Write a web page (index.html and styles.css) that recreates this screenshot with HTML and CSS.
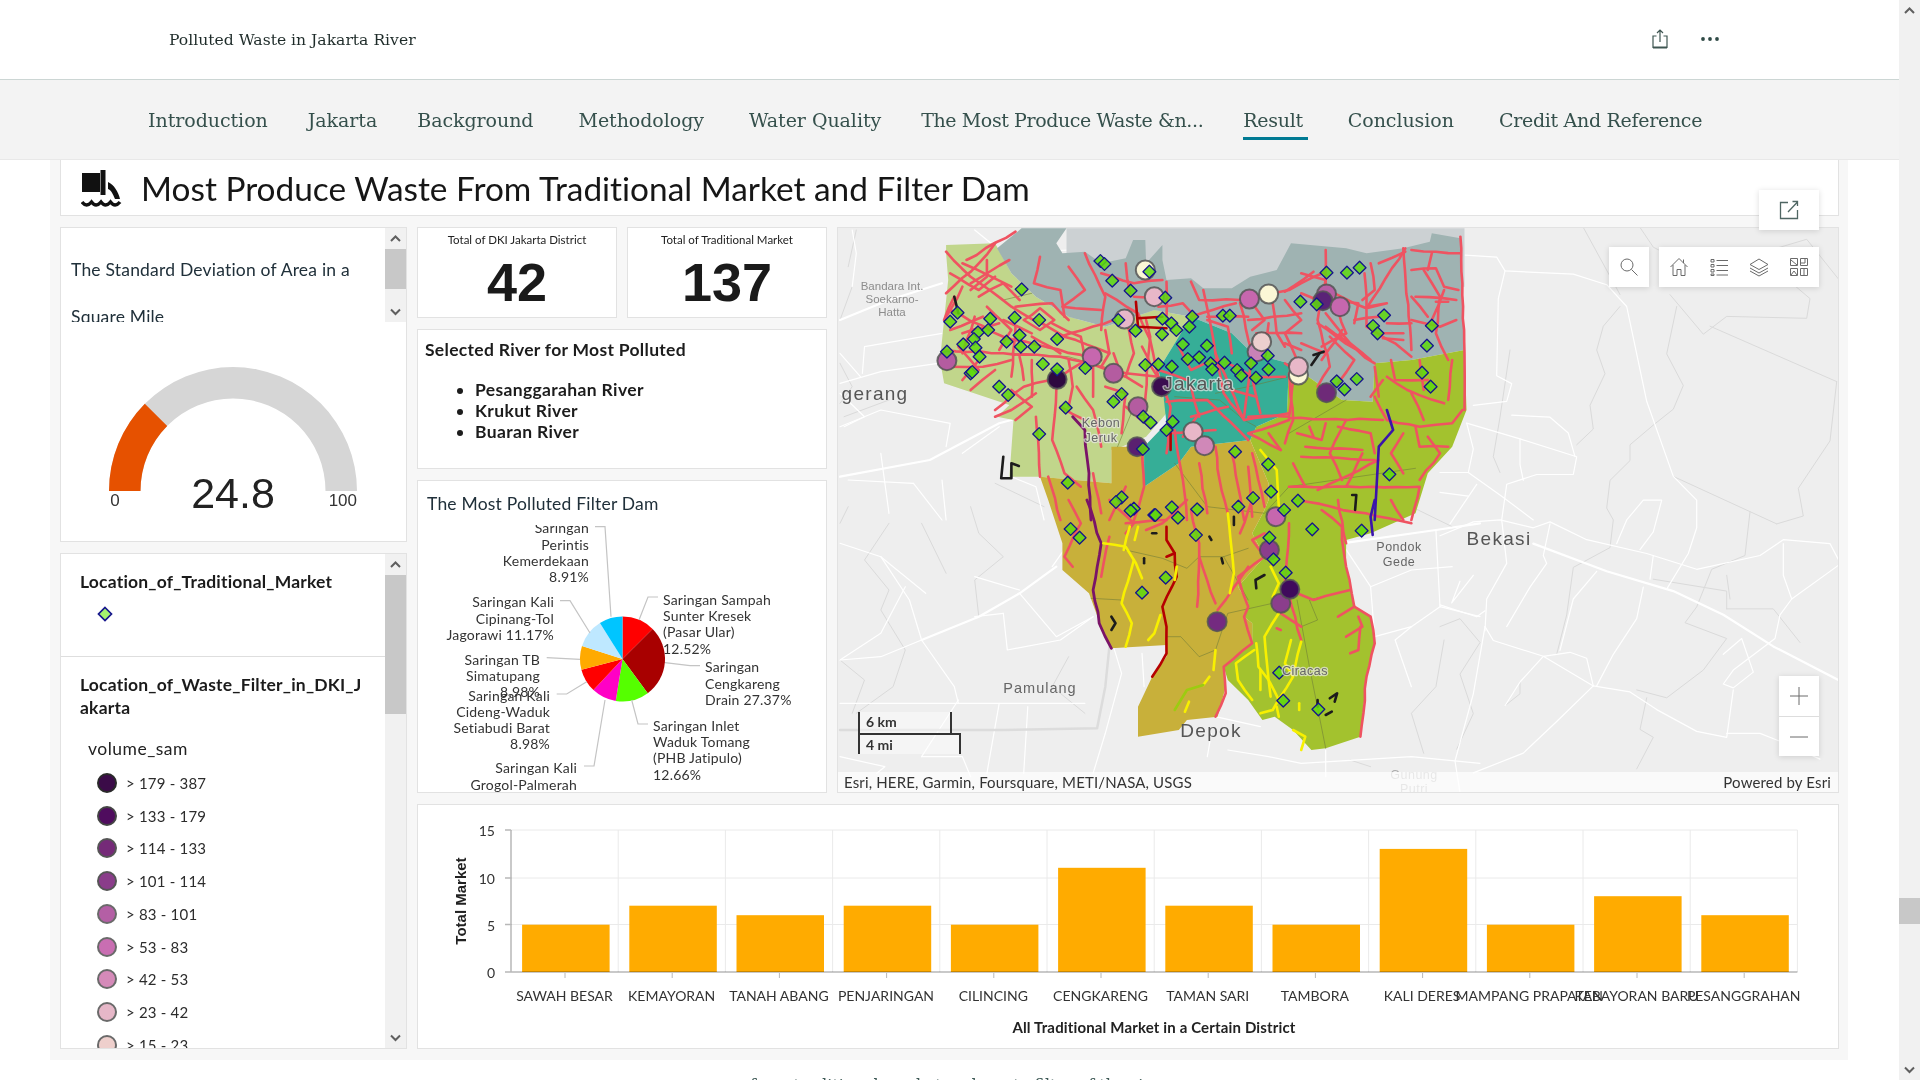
FILE: index.html
```html
<!DOCTYPE html>
<html lang="en">
<head>
<meta charset="utf-8">
<title>Polluted Waste in Jakarta River</title>
<link rel="stylesheet" href="styles.css">
</head>
<body>
<div class="app">
  <div class="main">
    <header class="topbar">
      <h1 class="story-title">Polluted Waste in Jakarta River</h1>
      <div class="top-actions">
        <svg class="ico-share" viewBox="0 0 16 20"><path d="M8 1V13M5 4L8 1L11 4M4.500 7H1V18.500H15V7H11.500"/><path class="thick" d="M1 18.500H15"/></svg>
        <svg class="ico-dots" viewBox="0 0 20 6"><circle cx="3" cy="3" r="1.900"/><circle cx="10" cy="3" r="1.900"/><circle cx="17" cy="3" r="1.900"/></svg>
      </div>
    </header>
    <nav class="tabs">
      <a class="tab">Introduction</a>
      <a class="tab">Jakarta</a>
      <a class="tab">Background</a>
      <a class="tab wide">Methodology</a>
      <a class="tab wide">Water Quality</a>
      <a class="tab long">The Most Produce Waste &amp;n...</a>
      <a class="tab active tight">Result</a>
      <a class="tab">Conclusion</a>
      <a class="tab wide tight">Credit And Reference</a>
    </nav>
    <section class="dash">
      <div class="card title-card">
        <svg class="title-icon" viewBox="0 0 44 40">
          <path d="M1 5H19V24H1Z"/><path d="M19.500 2H24.500V27H19.500Z"/>
          <path d="M27 14C33 17 37 23 39 31L34 31C32 26 30 22 27 21Z"/>
          <path class="wave" d="M1 34Q5.500 40 10.500 34Q15 40 20 34Q24.500 40 29.500 34Q34 40 39 34"/>
        </svg>
        <h2 class="dash-title">Most Produce Waste From Traditional Market and Filter Dam</h2>
      </div>
      <div class="dash-body">
        <div class="left-col">
          <div class="card gauge-card">
            <div class="gauge-head">
              <div class="gauge-text">
                <p>The Standard Deviation of Area in a</p>
                <p>Square Mile</p>
              </div>
              <div class="sb">
                <svg class="sb-arrow" viewBox="0 0 21 21"><path d="M6 13L10.500 8.500L15 13"/></svg>
                <div class="sb-track"><div class="sb-thumb thumb-gauge"></div></div>
                <svg class="sb-arrow" viewBox="0 0 21 21"><path d="M6 8.500L10.500 13L15 8.500"/></svg>
              </div>
            </div>
            <svg class="gauge" viewBox="61 322 345 219">
              <path class="g-back" d="M109 491A124 124 0 0 1 357 491L325.500 491A92.500 92.500 0 0 0 140.500 491Z"/>
              <path class="g-fill" d="M109 491A124 124 0 0 1 144.800 403.800L167.200 426A92.500 92.500 0 0 0 140.500 491Z"/>
              <text class="g-value" x="233" y="508" text-anchor="middle">24.8</text>
              <text class="g-tick" x="115" y="506" text-anchor="middle">0</text>
              <text class="g-tick" x="357" y="506" text-anchor="end">100</text>
            </svg>
          </div>
          <div class="card legend-card">
            <div class="legend-scroll">
              <div class="legend-sec first">
                <h3>Location_of_Traditional_Market</h3>
                <svg class="legend-diamond" viewBox="0 0 16 16"><path d="M8 1.500L14.500 8L8 14.500L1.500 8Z"/></svg>
              </div>
              <div class="legend-sec">
                <h3>Location_of_Waste_Filter_in_DKI_Jakarta</h3>
                <div class="legend-field">volume_sam</div>
                <ul class="legend-list">
                  <li><span class="sw c1"></span>&gt; 179 - 387</li>
                  <li><span class="sw c2"></span>&gt; 133 - 179</li>
                  <li><span class="sw c3"></span>&gt; 114 - 133</li>
                  <li><span class="sw c4"></span>&gt; 101 - 114</li>
                  <li><span class="sw c5"></span>&gt; 83 - 101</li>
                  <li><span class="sw c6"></span>&gt; 53 - 83</li>
                  <li><span class="sw c7"></span>&gt; 42 - 53</li>
                  <li><span class="sw c8"></span>&gt; 23 - 42</li>
                  <li><span class="sw c9"></span>&gt; 15 - 23</li>
                </ul>
              </div>
            </div>
            <div class="sb">
              <svg class="sb-arrow" viewBox="0 0 21 21"><path d="M6 13L10.500 8.500L15 13"/></svg>
              <div class="sb-track"><div class="sb-thumb thumb-legend"></div></div>
              <svg class="sb-arrow" viewBox="0 0 21 21"><path d="M6 8.500L10.500 13L15 8.500"/></svg>
            </div>
          </div>
        </div>
        <div class="right-grid">
          <div class="mid-col">
            <div class="kpi-row">
              <div class="card kpi"><div class="kpi-label">Total of DKI Jakarta District</div><div class="kpi-num">42</div></div>
              <div class="card kpi"><div class="kpi-label">Total of Traditional Market</div><div class="kpi-num">137</div></div>
            </div>
            <div class="card river-card">
              <h3>Selected River for Most Polluted</h3>
              <ul>
                <li>Pesanggarahan River</li>
                <li>Krukut River</li>
                <li>Buaran River</li>
              </ul>
            </div>
            <div class="card pie-card">
              <div class="pie-title">The Most Polluted Filter Dam</div>
              <svg class="pie" viewBox="418 525 408 267">
                <g id="pie-slices"></g>
                <g class="pie-lines">
                  <polyline points="595,526.700 605,526.700 611,616.700"/>
                  <polyline points="560,600.700 570,600.700 590,633"/>
                  <polyline points="546.700,657.700 580,659.300"/>
                  <polyline points="556.700,694 566.700,694 586.700,681.700"/>
                  <polyline points="584,766 594,766 605,700"/>
                  <polyline points="658,597 648,597 639,620"/>
                  <polyline points="700,665.700 690,665.700 665,662.700"/>
                  <polyline points="648,724 638,724 631.700,700"/>
                </g>
                <g class="pie-labels end">
                  <text x="589" y="533">Saringan</text><text x="589" y="550">Perintis</text><text x="589" y="566">Kemerdekaan</text><text x="589" y="582">8.91%</text>
                  <text x="554" y="607">Saringan Kali</text><text x="554" y="624">Cipinang-Tol</text><text x="554" y="640">Jagorawi 11.17%</text>
                  <text x="540" y="665">Saringan TB</text><text x="540" y="681">Simatupang</text><text x="540" y="697">8.98%</text>
                  <text x="550" y="701">Saringan Kali</text><text x="550" y="717">Cideng-Waduk</text><text x="550" y="733">Setiabudi Barat</text><text x="550" y="749">8.98%</text>
                  <text x="577" y="773">Saringan Kali</text><text x="577" y="790">Grogol-Palmerah</text>
                </g>
                <g class="pie-labels">
                  <text x="663" y="605">Saringan Sampah</text><text x="663" y="621">Sunter Kresek</text><text x="663" y="637">(Pasar Ular)</text><text x="663" y="654">12.52%</text>
                  <text x="705" y="672">Saringan</text><text x="705" y="689">Cengkareng</text><text x="705" y="705">Drain 27.37%</text>
                  <text x="653" y="731">Saringan Inlet</text><text x="653" y="747">Waduk Tomang</text><text x="653" y="763">(PHB Jatipulo)</text><text x="653" y="780">12.66%</text>
                </g>
              </svg>
            </div>
          </div>
          <div class="card map-card">
            <svg class="map" viewBox="838 228 1000 564">
              <g id="map-marks"></g>
              <g class="map-labels">
                <text class="ml-air" x="892" y="290">Bandara Int.</text>
                <text class="ml-air" x="892" y="303">Soekarno-</text>
                <text class="ml-air" x="892" y="316">Hatta</text>
                <text class="ml-city" x="875" y="400">gerang</text>
                <text class="ml-city halo" x="1199" y="390">Jakarta</text>
                <text class="ml-small halo" x="1101" y="427">Kebon</text>
                <text class="ml-small halo" x="1101" y="442">Jeruk</text>
                <text class="ml-city" x="1499" y="545">Bekasi</text>
                <text class="ml-small" x="1399" y="551">Pondok</text>
                <text class="ml-small" x="1399" y="566">Gede</text>
                <text class="ml-mid" x="1040" y="693">Pamulang</text>
                <text class="ml-city" x="1211" y="737">Depok</text>
                <text class="ml-small halo" x="1305" y="675">Ciracas</text>
                <text class="ml-small faint" x="1414" y="779">Gunung</text>
                <text class="ml-small faint" x="1414" y="793">Putri</text>
              </g>
            </svg>
            <button class="widget w-expand" type="button" aria-label="Open">
              <svg viewBox="0 0 20 20"><path d="M9 2.500H1.500V18.500H18.500V10M9 12L18.500 2M13.500 1.500H18.500V6"/></svg>
            </button>
            <button class="widget w-search" type="button" aria-label="Search">
              <svg viewBox="0 0 20 20"><circle cx="8" cy="8" r="6"/><path d="M12.500 12.500L18.500 18.500"/></svg>
            </button>
            <div class="widget w-tools">
              <svg viewBox="0 0 20 20"><path d="M1.500 10L10 1.500L18.500 10M4 8V18.500H8V12.500H12V18.500H16V8M14.500 2.500V6"/></svg>
              <svg viewBox="0 0 20 20"><path d="M2 2.500H5V5H2ZM2 7.500H5V10H2ZM2 12.500H5V15H2ZM2 17H5V18.500H2ZM7.500 3.500H19M7.500 8.500H19M7.500 13.500H19M7.500 18H19"/></svg>
              <svg viewBox="0 0 20 20"><path d="M10 2L19 7.500L10 12.500L1 7.500ZM1 11L10 16L19 11M1 14L10 19L19 14"/></svg>
              <svg viewBox="0 0 20 20"><path d="M1.500 1.500H8.500V8.500H1.500ZM11.500 1.500H18.500V8.500H11.500ZM1.500 11.500H8.500V18.500H1.500ZM11.500 11.500H18.500V18.500H11.500ZM2 3L8 8M12 6H16V2M2 18L5 14L8 18M15 12V18"/></svg>
            </div>
            <div class="widget w-zoom">
              <button type="button" aria-label="Zoom in"><svg viewBox="0 0 20 20"><path d="M10 1V19M1 10H19"/></svg></button>
              <button type="button" aria-label="Zoom out"><svg viewBox="0 0 20 20"><path d="M1 10H19"/></svg></button>
            </div>
            <div class="scale">
              <div class="scale-km">6 km</div>
              <div class="scale-mi">4 mi</div>
            </div>
            <div class="attrib"><span>Esri, HERE, Garmin, Foursquare, METI/NASA, USGS</span><span>Powered by Esri</span></div>
          </div>
          <div class="card bar-card">
            <svg class="bars" viewBox="418 805 1420 243">
              <g class="grid">
                <path d="M511 830H1797.400M511 878H1797.400M511 924.500H1797.400"/>
                <path d="M618.200 830V972M725.400 830V972M832.600 830V972M939.800 830V972M1047 830V972M1154.200 830V972M1261.400 830V972M1368.600 830V972M1475.800 830V972M1583 830V972M1690.200 830V972M1797.400 830V972"/>
              </g>
              <g class="bar">
                <rect x="522.100" y="924.700" width="87.500" height="47.300"/>
                <rect x="629.300" y="905.700" width="87.500" height="66.300"/>
                <rect x="736.500" y="915.200" width="87.500" height="56.800"/>
                <rect x="843.700" y="905.700" width="87.500" height="66.300"/>
                <rect x="950.900" y="924.700" width="87.500" height="47.300"/>
                <rect x="1058.100" y="867.800" width="87.500" height="104.200"/>
                <rect x="1165.300" y="905.700" width="87.500" height="66.300"/>
                <rect x="1272.500" y="924.700" width="87.500" height="47.300"/>
                <rect x="1379.700" y="848.900" width="87.500" height="123.100"/>
                <rect x="1486.900" y="924.700" width="87.500" height="47.300"/>
                <rect x="1594.100" y="896.200" width="87.500" height="75.800"/>
                <rect x="1701.300" y="915.200" width="87.500" height="56.800"/>
              </g>
              <path class="axis" d="M505 972H1797.400M511 830V972M505 830H511M505 878H511M505 924.500H511"/>
              <path class="ticks" d="M565 973V978M672.200 973V978M779.400 973V978M886.600 973V978M993.800 973V978M1101 973V978M1208.200 973V978M1315.400 973V978M1422.600 973V978M1529.800 973V978M1637 973V978M1744.200 973V978"/>
              <g class="y-labels">
                <text x="495" y="836">15</text><text x="495" y="884">10</text><text x="495" y="931">5</text><text x="495" y="978">0</text>
              </g>
              <text class="y-title" transform="translate(466 901) rotate(-90)">Total Market</text>
              <g class="x-labels">
                <text x="564.500" y="1001">SAWAH BESAR</text>
                <text x="671.700" y="1001">KEMAYORAN</text>
                <text x="778.900" y="1001">TANAH ABANG</text>
                <text x="886" y="1001">PENJARINGAN</text>
                <text x="993.300" y="1001">CILINCING</text>
                <text x="1100.500" y="1001">CENGKARENG</text>
                <text x="1207.700" y="1001">TAMAN SARI</text>
                <text x="1314.900" y="1001">TAMBORA</text>
                <text x="1422.100" y="1001">KALI DERES</text>
                <text x="1529.300" y="1001">MAMPANG PRAPATAN</text>
                <text x="1636.500" y="1001">KEBAYORAN BARU</text>
                <text x="1743.700" y="1001">PESANGGRAHAN</text>
              </g>
              <text class="x-title" x="1154" y="1033">All Traditional Market in a Certain District</text>
            </svg>
          </div>
        </div>
      </div>
    </section>
    <p class="after-text">from traditional market and waste filter of the river</p>
  </div>
  <div class="sb page-sb">
    <svg class="sb-arrow" viewBox="0 0 21 21"><path d="M6 13L10.500 8.500L15 13"/></svg>
    <div class="sb-track"><div class="sb-thumb thumb-page"></div></div>
    <svg class="sb-arrow" viewBox="0 0 21 21"><path d="M6 8.500L10.500 13L15 8.500"/></svg>
  </div>
</div>
<script src="map.js"></script>
</body>
</html>
```
FILE: styles.css
```css
* { box-sizing: border-box; }
html, body { margin: 0; height: 100%; overflow: hidden; background: #fff; }
body { font-family: Lato, "Open Sans", sans-serif; color: #1c1c1c; font-variant-ligatures: none; }
h1, h2, h3, p, ul { margin: 0; padding: 0; font-weight: inherit; }

.app { display: flex; height: 1080px; }
.main { flex: 1; min-width: 0; }

/* scrollbars */
.sb { width: 21px; flex: none; display: flex; flex-direction: column; background: #f1f1f1; }
.sb-arrow { width: 21px; height: 21px; flex: none; display: block; fill: none; stroke: #5f5f5f; stroke-width: 2; }
.sb-track { flex: 1; min-height: 0; }
.sb-thumb { background: #c8c8c8; }
.thumb-gauge { height: 40px; }
.thumb-legend { height: 139px; }
.thumb-page { height: 26px; margin-top: 877px; }

/* header */
.topbar { height: 80px; border-bottom: 1px solid #ccd6d4; display: flex; align-items: center; padding: 0 179px 0 169px; justify-content: space-between; }
.story-title { font: 15.600px "DejaVu Serif", serif; color: #1e2b29; }
.top-actions { display: flex; align-items: center; gap: 32px; }
.ico-share { width: 16px; height: 20px; fill: none; stroke: #3f5652; stroke-width: 1.200; margin-top: -2px; }
.ico-share .thick { stroke-width: 2; }
.ico-dots { width: 20px; height: 6px; fill: #2f4a46; margin-top: -2px; }

.tabs { height: 80px; background: #f3f3f3; border-bottom: 1px solid #e8e8e8; display: flex; align-items: center; gap: 40px; padding-left: 148px; }
.tab { font: 19px "DejaVu Serif", serif; color: #35504c; letter-spacing: -.05px; padding: 8px 0 6px; border-bottom: 3px solid transparent; margin-top: 1px; white-space: nowrap; }
.tab.wide { margin-left: 5px; }
.tab.long { letter-spacing: -.4px; }
.tab.tight { letter-spacing: -.3px; }
.tab.active { border-bottom-color: #007a93; padding-right: 5px; }

/* dashboard */
.dash { margin-left: 50px; width: 1798px; height: 900px; background: #f7f7f7; padding: 0 9px 0 10px; display: flex; flex-direction: column; gap: 11px; }
.card { background: #fff; border: 1px solid #e2e2e2; }
.title-card { height: 56px; flex: none; display: flex; align-items: center; gap: 16px; padding-left: 20px; border-top: 0; }
.title-icon { width: 44px; height: 40px; flex: none; fill: #111; margin-top: 1px; }
.title-icon .wave { fill: none; stroke: #111; stroke-width: 3.500; }
.dash-title { font-size: 33.400px; color: #161616; white-space: nowrap; }

.dash-body { display: flex; gap: 10px; flex: 1; min-height: 0; height: 822px; }
.left-col { width: 347px; flex: none; display: flex; flex-direction: column; gap: 11px; }
.gauge-card { height: 315px; flex: none; }
.gauge-head { height: 94px; display: flex; overflow: hidden; }
.gauge-text { flex: 1; padding: 18px 10px 0; font-size: 17.500px; letter-spacing: .2px; line-height: 47px; color: #20303a; height: 94px; overflow: hidden; }
.gauge { width: 345px; height: 219px; display: block; }
.g-back { fill: #d6d6d6; }
.g-fill { fill: #e65100; }
.g-value { font: 43px "Liberation Sans", sans-serif; fill: #222; }
.g-tick { font: 17px "Liberation Sans", sans-serif; fill: #333; }

.legend-card { height: 496px; flex: none; display: flex; }
.legend-scroll { flex: 1; min-width: 0; overflow: hidden; }
.legend-sec { padding: 16px 19px 0; }
.legend-sec.first { height: 103px; border-bottom: 1px solid #dedede; }
.legend-sec h3 { font-size: 17.500px; letter-spacing: .2px; font-weight: 700; line-height: 23px; color: #1b1b1b; overflow-wrap: anywhere; width: 288px; }
.legend-diamond { display: block; width: 16px; height: 16px; margin: 13px 0 0 17px; fill: #a5f36e; stroke: #14148c; stroke-width: 1.700; }
.legend-field { font-size: 17.500px; letter-spacing: .5px; line-height: 23px; margin: 18px 0 0 8px; color: #222; }
.legend-list { list-style: none; margin: 6.500px 0 0 17px; }
.legend-list li { display: flex; align-items: center; gap: 9px; height: 32.750px; font-size: 15px; color: #2c2c2c; letter-spacing: .2px; }
.sw { width: 20px; height: 20px; border-radius: 50%; border: 2px solid #6a6a6a; flex: none; }
.c1 { background: #3b0b48; border-color: #2a2a2a; }
.c2 { background: #4f0c5e; border-color: #444; }
.c3 { background: #752a78; border-color: #555; }
.c4 { background: #8a3d8a; border-color: #555; }
.c5 { background: #b45fa5; }
.c6 { background: #c96eb2; }
.c7 { background: #d58ab9; }
.c8 { background: #e6b7c8; }
.c9 { background: #eecfcc; }

.right-grid { flex: none; display: grid; grid-template-columns: 410px 1002px; grid-template-rows: 566px 245px; gap: 11px 10px; }
.mid-col { display: flex; flex-direction: column; gap: 11px; }
.kpi-row { display: flex; gap: 10px; height: 91px; flex: none; }
.kpi { flex: 1; text-align: center; }
.kpi-label { font-size: 11.500px; line-height: 14px; margin-top: 5px; color: #222; }
.kpi-num { font: 700 54px/50px "Liberation Sans", sans-serif; color: #1a1a1a; margin-top: 10px; }
.river-card { height: 140px; flex: none; padding: 8px 7px; }
.river-card h3 { font-size: 17.500px; letter-spacing: .3px; font-weight: 700; line-height: 23px; color: #1c1c1c; }
.river-card ul { margin: 18px 0 0 34px; list-style: disc; }
.river-card li { font-size: 17.500px; letter-spacing: .35px; font-weight: 700; line-height: 21px; margin-left: 16px; color: #1c1c1c; }
.pie-card { flex: 1; min-height: 0; display: flex; flex-direction: column; }
.pie-title { font-size: 17.500px; letter-spacing: .2px; line-height: 22px; padding: 12px 9px 10px; height: 44px; color: #20303a; flex: none; }
.pie { width: 408px; height: 267px; display: block; }
.pie-lines polyline { fill: none; stroke: #c4c4c4; stroke-width: 1.200; }
.pie-labels text { font-size: 14px; letter-spacing: .2px; fill: #333; }
.pie-labels.end text { text-anchor: end; }

/* map */
.map-card { position: relative; }
.map { width: 1000px; height: 564px; display: block; background: #eeeeee; }
.map * { stroke-linejoin: round; stroke-linecap: round; }
.r-sea { fill: #ccd1d3; }
.r-north { fill: #9fb3b2; }
.r-west { fill: #c1d68b; }
.r-central { fill: #36ae97; }
.r-south { fill: #c8b03a; }
.r-east { fill: #a3c22e; }
.l-road { fill: none; stroke: #fff; stroke-width: 1.200; }
.l-major { fill: none; stroke: #fff; stroke-width: 2.200; }
.l-bound { fill: none; stroke: #dadada; stroke-width: 1; }
.l-border { fill: none; stroke: #dcdcdc; stroke-width: 2.500; }
.l-district { fill: none; stroke: #6e7a38; stroke-width: .8; opacity: .7; }
.l-red { fill: none; stroke: #ef5361; stroke-width: 2.600; }
.l-dred { fill: none; stroke: #b50000; stroke-width: 2.600; }
.l-purple { fill: none; stroke: #7a1468; stroke-width: 2.800; }
.l-indigo { fill: none; stroke: #3a14ab; stroke-width: 2.600; }
.l-yellow { fill: none; stroke: #f8f000; stroke-width: 2.600; }
.l-lime { fill: none; stroke: #9ccc10; stroke-width: 2.600; }
.l-black { fill: none; stroke: #1c1c1c; stroke-width: 2.600; }
.m-diamond { fill: #5ed80e; fill-opacity: .85; stroke: #14148c; stroke-width: 1.300; }
.m-circle { stroke: #555; stroke-width: 2; stroke-opacity: .85; }
.map-labels text { text-anchor: middle; }
.ml-air { font: 11.500px "Liberation Sans", sans-serif; fill: #8c8c8c; }
.ml-city { font: 19px "Liberation Sans", sans-serif; fill: #555; letter-spacing: 1.300px; }
.ml-mid { font: 14.500px "Liberation Sans", sans-serif; fill: #666; letter-spacing: 1px; }
.ml-small { font: 12.500px "Liberation Sans", sans-serif; fill: #666; letter-spacing: .5px; }
.ml-small.faint { fill: #aaa; }
.halo { paint-order: stroke; stroke: #e8e8e8; stroke-width: 2.500px; stroke-opacity: .7; }

.widget { position: absolute; background: #fff; border: 0; padding: 0; box-shadow: 0 1px 6px rgba(0,0,0,.14); display: flex; align-items: center; justify-content: center; }
.widget svg { width: 20px; height: 20px; fill: none; stroke: #6a6a6a; stroke-width: 1; display: block; }
.w-expand { width: 60px; height: 40px; top: -38px; right: 19px; }
.w-expand svg { stroke: #4f6663; stroke-width: 1.300; }
.w-search { width: 40px; height: 40px; top: 19px; right: 189px; }
.w-tools { width: 160px; height: 40px; top: 19px; right: 19px; justify-content: space-around; }
.w-zoom { width: 40px; height: 80px; top: 448px; right: 19px; flex-direction: column; }
.w-zoom button { width: 40px; height: 40px; background: transparent; border: 0; padding: 0; display: flex; align-items: center; justify-content: center; }
.w-zoom button + button { border-top: 1px solid #ddd; }
.scale { position: absolute; left: 20px; top: 484px; font-size: 14px; font-weight: 700; color: #333; }
.scale-km { width: 94px; height: 21px; border-left: 2.500px solid #333; border-right: 2.500px solid #333; padding-left: 6px; line-height: 20px; background: rgba(255,255,255,.4); }
.scale-mi { width: 103px; height: 21px; border: 2.500px solid #333; border-bottom: 0; padding-left: 6px; line-height: 19px; background: rgba(255,255,255,.4); }
.attrib { position: absolute; left: 0; right: 0; bottom: 0; height: 20px; background: rgba(255,255,255,.72); display: flex; justify-content: space-between; padding: 0 7px 0 6px; font-size: 15px; letter-spacing: .15px; line-height: 20px; color: #333; }

/* bar chart */
.bar-card { grid-column: 1 / 3; }
.bars { width: 1420px; height: 243px; display: block; }
.grid path { fill: none; stroke: #eaeaea; stroke-width: 1; }
.bar rect { fill: #ffab00; }
.axis { fill: none; stroke: #b8b8b8; stroke-width: 1.500; mix-blend-mode: multiply; }
.ticks { fill: none; stroke: #b8b8b8; stroke-width: 1; }
.y-labels text { font-size: 14px; fill: #333; text-anchor: end; }
.x-labels text { font-size: 14px; fill: #333; text-anchor: middle; }
.y-title { font: 700 15px "Liberation Sans", sans-serif; fill: #222; text-anchor: middle; }
.x-title { font-size: 15px; letter-spacing: .15px; font-weight: 700; fill: #222; text-anchor: middle; }

.after-text { font: 16px "DejaVu Serif", serif; color: #3f5a56; white-space: nowrap; padding: 16px 0 0 750px; }
```
FILE: map.js
```js
(function () {
  var NS = 'http://www.w3.org/2000/svg';
  var frames = {
    a: function (p) { return [840 + p[0] / 2.45, 220 + p[1] / 3]; },
    b: function (p) { return [840 + p[0] / 2.45, 500 + p[1] / 3]; },
    c: function (p) { return [1440 + p[0] / 3, 180 + p[1] / 2.53]; }
  };
  var seed = 12345;
  function rnd() { seed = (seed * 16807) % 2147483647; return seed / 2147483647 - 0.5; }
  function parse(f, s) {
    return s.trim().split(/\s+/).map(function (t) { return frames[f](t.split(',').map(Number)); });
  }
  function wiggle(pts, amount) {
    var out = [pts[0]];
    for (var i = 1; i < pts.length; i++) {
      var p = pts[i - 1], q = pts[i];
      var dx = q[0] - p[0], dy = q[1] - p[1], len = Math.sqrt(dx * dx + dy * dy);
      var n = Math.floor(len / 11);
      for (var k = 1; k < n; k++) {
        var o = rnd() * amount;
        out.push([p[0] + dx * k / n - dy / len * o, p[1] + dy * k / n + dx / len * o]);
      }
      out.push(q);
    }
    return out;
  }
  function str(pts) {
    return pts.map(function (q) { return q[0].toFixed(1) + ',' + q[1].toFixed(1); }).join(' ');
  }
  function add(parent, name, attrs) {
    var e = document.createElementNS(NS, name);
    Object.keys(attrs).forEach(function (k) { e.setAttribute(k, attrs[k]); });
    parent.appendChild(e);
    return e;
  }
  var g = document.getElementById('map-marks');
  function lines(cls, f, list, amount) {
    list.forEach(function (s) {
      var pts = parse(f, s);
      add(g, 'polyline', { 'class': cls, points: str(amount ? wiggle(pts, amount) : pts) });
    });
  }
  function poly(cls, f, s) { add(g, 'polygon', { 'class': cls, points: str(parse(f, s)) }); }

  /* base map */
  lines('l-bound', 'c', [
    '810,370 1190,510', '700,750 1010,870', '1190,510 1170,660 1075,780 1090,850 1010,870',
    '690,290 790,390 860,345 1100,350 1110,300 1040,250',
    '430,120 540,290', '600,120 640,170 780,230 1100,150 1195,250',
    '710,320 680,440 730,520 700,580 640,620 570,670 570,710 510,760 500,830 520,860 510,930 400,980 380,1100 350,1200',
    '540,320 490,370 470,430 495,490 450,570 460,630 410,670',
    '210,430 180,600 160,700 180,740', '930,840 915,950 815,985 770,1080 735,1120 860,1160 790,1240 680,1310 590,1290',
    '860,1085 1000,1085 1080,1170', '640,1010 860,1040 860,1085', '860,1000 870,1060',
    '0,1130 60,1110 120,1170 60,1250 100,1350 50,1440', '240,1270 240,1300 195,1330',
    '620,1310 600,1390 640,1410 590,1490'
  ]);
  lines('l-bound', 'a', ['30,200 0,300', '0,430 30,500 0,550', '40,30 20,140', '380,790 500,860', '10,590 120,540']);
  lines('l-bound', 'b', [
    '120,70 60,180 120,270 100,330 160,450 130,560 40,640', '320,20 340,100 400,170 330,240 340,350',
    '1400,20 1500,80', '1480,420 1460,560 1400,640 1430,760', '200,70 260,220', '560,470 520,560 600,640',
    '20,20 0,70', '0,480 60,540 30,640', '1250,780 1300,800'
  ]);
  lines('l-road', 'a', [
    '0,490 100,455 240,430', '60,380 250,340', '60,380 55,460', '30,30 40,100 30,200', '390,620 300,700',
    '0,620 100,570 270,610 260,680', '0,520 60,590 10,620', '180,790 250,900', '420,770 480,800 500,900',
    '330,30 370,70', '440,40 480,95 560,90', '0,400 50,470', '20,780 180,790', '100,700 120,880', '250,780 260,900'
  ]);
  lines('l-major', 'a', ['0,770 220,720 390,610 420,600', '250,190 120,240 0,300']);
  lines('l-road', 'b', [
    '0,130 100,170 210,280', '200,420 280,560 290,610', '0,480 100,470 200,420', '0,610 390,610 600,610',
    '440,280 530,410 620,350', '330,230 440,270', '1310,410 1400,380 1470,320 1568,350', '1300,260 1400,210 1500,200',
    '900,770 910,700', '920,650 1030,680', '950,750 1050,770 1130,790 1400,770 1568,790', '1190,750 1190,830',
    '670,440 690,520 650,700 620,820', '740,460 745,560', '400,340 410,450 540,420 620,350', '0,770 110,800 90,820',
    '100,170 170,300 200,420', '160,260 100,400 0,480', '290,600 200,770', '390,610 360,820', '460,620 450,820',
    '1230,130 1300,260 1310,410', '1470,320 1460,90', '1400,380 1360,420 1400,560', '520,200 560,130',
    '330,350 400,340', '200,770 300,770 320,830'
  ]);
  lines('l-major', 'b', ['200,420 340,350 440,280 530,200', '1230,130 1460,90 1568,70']);
  lines('l-major', 'c', ['280,920 500,990 700,1040 850,1100 1000,1180 1195,1265']);
  lines('l-road', 'c', [
    '75,190 170,195 195,230 400,238 500,265 560,320 590,440 620,560 700,750 770,810 770,880 745,945 680,1035',
    '0,900 100,865 180,860 280,880 330,865 440,910 620,945 770,985 960,950 1030,910 1170,920 1195,960',
    '80,615 240,655 410,700 400,745 290,745 200,770 185,860 200,970 140,1060 135,1140',
    '100,570 200,560 215,515 170,495 175,300 195,230', '0,740 85,740 185,800 280,860', '215,595 330,600 385,640 405,700',
    '1195,975 1055,1060 1020,1100 1005,1160 880,1240 850,1275 880,1285 940,1245 905,1160 850,1200',
    '460,1280 310,1205 160,1165 135,1130', '460,1280 440,1210 390,1195 310,1205 240,1270 195,1330',
    '460,1280 570,1295 650,1340 770,1395 860,1410 880,1290', '860,1400 960,1400 1020,1420 1140,1465',
    '460,1280 350,1370 250,1450 100,1500', '0,1075 110,1105 135,1090', '135,1130 100,1300 45,1470 60,1550',
    '610,1030 590,1110 520,1200 470,1280', '1055,1060 1030,1000 1030,920', '80,615 100,680 85,740',
    '240,655 240,720 250,760', '530,920 560,860 610,810 665,810 640,890 600,935', '0,790 85,800', '110,770 30,870',
    '330,870 310,950 320,970 270,1030 200,1130', '470,990 400,1060 360,1190', '640,950 630,1010', '60,1015 35,1070 100,1000'
  ]);
  lines('l-border', 'b', ['660,440 650,560 630,685 400,690 0,690']);

  /* districts */
  poly('r-sea', 'a', '555,25 1530,25 1530,200 555,300');
  poly('r-west', 'a', '260,75 380,70 420,160 480,230 560,290 650,320 700,300 770,270 860,290 780,450 800,580 750,650 690,680 665,690 665,790 490,770 415,770 425,600 385,590 415,555 255,490 245,420 255,300 265,180 260,100');
  poly('r-north', 'a', '385,85 430,40 445,25 555,25 530,70 545,100 600,95 640,130 700,115 718,60 748,60 750,130 790,75 790,120 800,180 860,175 890,205 960,205 1005,170 1070,150 1105,70 1240,85 1290,100 1380,85 1445,65 1450,40 1520,55 1530,390 1400,420 1310,430 1305,545 1230,540 1170,490 1100,430 1010,400 960,340 880,300 860,290 770,270 700,300 650,320 560,290 480,230 420,160');
  poly('r-east', 'a', '1005,660 1020,620 1095,580 1100,430 1170,490 1230,540 1305,545 1310,430 1400,420 1530,390 1535,570 1500,680 1440,760 1410,880 1300,940 1240,960 1240,1040 1260,1160 1300,1190 1310,1270 1290,1370 1275,1550 1190,1585 1155,1590 1110,1530 1065,1490 1035,1500 1000,1440 950,1380 940,1340 1010,1270 1010,1210 990,1190 1000,1150 975,1100 1040,1010 1010,940 1040,870 1050,840 1050,790');
  poly('r-south', 'a', '490,770 665,790 665,680 745,680 745,800 830,730 860,680 1005,660 1050,790 1050,840 1040,870 1010,940 1040,1010 975,1100 1000,1150 990,1190 1010,1210 1010,1270 940,1340 945,1400 925,1490 850,1500 830,1530 730,1550 730,1460 765,1370 800,1310 800,1275 665,1285 640,1220 610,1120 545,1050 545,970 510,840');
  poly('r-central', 'a', '860,290 880,300 960,340 1010,400 1100,430 1095,580 1020,620 1005,660 860,680 830,730 745,800 745,680 800,610 790,500 780,450');
  lines('l-district', 'a', ['820,730 900,860 1040,880 1100,800 1410,745', '1100,640 1240,540', '1020,620 990,600 1000,500 1100,470', '920,520 1000,500', '820,530 930,540 990,600', '420,400 560,410 700,460', '400,240 470,220', '720,560 680,680']);
  lines('l-district', 'b', ['700,150 790,175 850,205 880,170 940,170 1000,145', '615,295 690,300', '800,410 835,410 880,470 920,450 950,340 1060,310', '1130,380 1170,360 1150,300 1250,270', '1120,300 1150,500 1190,745', '940,170 1000,300']);

  /* roads inside the city */
  lines('l-red', 'a', [
    '430,35 310,120', '380,70 340,130 260,220', '260,95 320,170 420,260 550,350 660,400', '280,230 255,300 270,270 400,350 640,420',
    '255,390 400,400 540,410 700,460 780,470', '415,120 320,190', '360,120 360,170 320,210', '470,285 490,265 525,300 490,330 450,300 470,285',
    '540,350 700,290', '650,330 660,400 640,440', '610,410 540,470 450,500 380,570', '380,590 420,570 480,520', '480,590 490,770',
    '530,510 520,660 550,760 590,800', '470,420 470,530', '380,450 320,510', '690,470 670,400', '620,440 620,530', '740,380 800,530',
    '750,300 760,350 745,600', '300,130 420,200', '270,330 350,290', '290,380 340,450', '400,300 470,340', '430,320 420,470',
    '270,160 340,210 380,170', '300,200 270,270', '340,230 400,190 440,240', '360,260 420,330 390,390', '330,290 300,400', '300,340 390,310',
    '270,440 350,440 420,420', '300,480 340,420', '430,260 520,250 560,300', '520,310 590,350 600,420', '470,350 540,400', '440,410 450,480',
    '560,420 570,500 560,560', '640,440 700,470 740,500', '700,300 720,400 700,470', '650,500 700,520 690,640', '580,500 620,570 640,680', '540,560 600,600',
    '420,510 470,560 430,600', '700,560 760,620',
    '490,110 475,190 540,210 550,290', '560,140 600,210 545,260 640,270', '600,100 650,230 640,330', '650,220 730,280 760,360 780,470 810,560 800,700',
    '720,230 800,240', '800,185 800,290', '860,185 880,240 980,240 1100,210 1190,155', '890,210 920,400 990,600', '860,290 970,250',
    '1000,300 1060,290 1130,280', '980,250 1010,400 990,590', '1060,250 1070,340 1090,380', '1130,160 1190,180 1170,300 1200,440 1170,500',
    '1090,215 1160,155', '1190,90 1190,210 1290,265 1385,85', '1380,85 1400,390', '1320,130 1385,95', '1400,150 1460,145 1480,200 1515,210',
    '1290,265 1340,250 1290,260 1290,320 1360,370 1400,410', '1170,310 1310,430', '1200,350 1260,420 1220,490',
    '1230,330 1180,420', '1330,340 1380,340', '1330,355 1380,360', '1460,245 1490,245', '1400,90 1520,100', '1020,340 1130,340', '1050,310 1040,400',
    '1130,370 1190,400', '1090,370 1130,390', '1240,340 1180,380', '1190,320 1280,400', '900,290 1000,290', '1430,150 1470,230 1460,340 1490,420',
    '1285,160 1290,260', '1400,230 1440,290', '1090,430 1140,470',
    '700,130 710,220', '640,160 720,190 790,180', '780,260 840,250 870,290', '900,300 950,320 960,400', '1010,250 1040,300 1010,330', '1090,240 1130,300 1090,340 1120,420',
    '1130,220 1170,240', '1200,240 1270,250 1260,310', '1220,270 1240,340', '1190,280 1250,370 1300,420', '1260,300 1320,290', '1300,130 1310,210 1280,240',
    '1400,300 1470,320 1510,300', '1410,230 1510,240', '1450,100 1440,150', '1480,210 1450,300', '1340,310 1400,310',
    '800,545 900,540 960,610 1000,660', '860,500 880,590', '920,400 940,520 990,600 1100,580', '1000,590 1100,590 1110,480 1130,490', '810,640 920,630',
    '830,380 860,450 920,420', '780,450 850,480', '950,430 1010,470 1090,470', '1010,470 1030,580', '960,510 1020,530', '860,590 950,560', '840,650 880,580',
    '1100,600 1000,640 1080,690', '1310,530 1340,600 1420,620 1500,610 1525,570', '1310,440 1320,530', '1340,470 1390,510 1480,550', '1100,595 1330,600',
    '1100,460 1110,600 1090,670', '1410,620 1420,680 1490,680', '1240,600 1200,700 1230,780', '1100,800 1420,800 1400,900', '1130,710 1310,720',
    '1140,680 1280,690', '1320,720 1170,810', '1150,620 1160,650', '1050,640 1080,690', '1420,420 1430,510',
    '1120,640 1180,660 1190,610', '1220,620 1300,640 1310,700', '1380,640 1350,700 1380,760', '1440,650 1470,700 1420,780', '1280,700 1240,800', '1110,730 1140,800',
    '1400,520 1430,600', '1500,420 1490,540', '1350,420 1360,480 1440,480', '1330,480 1300,530',
    '820,630 840,780 850,900', '740,690 745,800 720,900', '920,680 930,780 950,880', '960,700 990,900', '1010,700 1040,860', '510,770 540,900',
    '620,760 640,880', '700,800 660,900', '880,730 900,880', '1000,740 1010,890'
  ], 1.6);
  lines('l-red', 'a', ['1520,50 1530,400 1530,570'], 1);
  lines('l-red', 'b', [
    '560,0 590,70 550,170 570,200', '660,110 640,230', '660,0 720,70 700,100', '850,0 790,70 750,90', '800,60 700,70',
    '860,30 880,130 880,170 920,310', '880,170 875,320', '980,100 1010,0', '1040,100 1010,120 1040,170 975,230 1000,320 990,350 1010,430 940,500 945,580 920,650',
    '1000,200 925,330', '1120,0 1400,70', '1180,30 1230,80 1230,120', '1230,120 1240,200 1260,320 1220,350', '1260,320 1300,350 1310,430 1290,530 1275,710',
    '1270,350 1280,380 1240,410', '1275,380 1270,450 1250,460', '1100,70 1090,250 1130,420', '1080,340 1130,380', '1120,280 1160,300 1250,270', '1220,0 1240,130',
    '1350,0 1380,60', '1070,385 1080,390'
  ], 1.6);
  lines('l-dred', 'a', ['725,245 730,320 800,325', '730,295 790,290', '810,640 810,690']);
  lines('l-dred', 'b', ['800,80 800,120 820,160 800,170', '820,160 825,230 790,320 800,380 800,460 765,530'], 1.5);
  lines('l-purple', 'a', ['570,590 600,630 610,760 615,900'], 2);
  lines('l-purple', 'b', ['605,0 640,130 620,270 635,370 665,445'], 2);
  lines('l-indigo', 'a', ['1340,570 1355,630 1320,680 1310,900']);
  lines('l-indigo', 'b', ['1310,0 1300,50 1305,105']);
  lines('l-yellow', 'a', ['1030,690 1070,750 1075,860']);
  lines('l-yellow', 'b', [
    '645,130 700,140 725,190 740,235', '710,80 695,150', '730,80 722,120', '720,180 690,310 715,370 700,440', '785,345 770,400 755,420', '825,200 820,240',
    '950,40 965,220 955,280', '1055,200 1075,250 1060,290', '1075,340 1040,410 1050,540 1075,600', '1105,420 1090,490 1110,530 1060,630 1030,640', '1130,425 1115,500',
    '1020,430 1025,500 1050,540 1055,590', '1015,450 970,490 975,540 1010,600', '1030,510 1030,570', '920,450 915,510', '905,530 890,555', '1110,690 1140,710 1130,750',
    '1125,610 1125,630', '855,605 845,635', '1070,620 1075,650'
  ], 1);
  lines('l-lime', 'b', ['890,555 850,570 820,630']);
  lines('l-black', 'a', ['400,710 395,775 420,775 420,730 438,738', '280,230 290,280', '1185,395 1160,405', '1175,400 1155,435', '1255,825 1265,825 1262,870']);
  lines('l-black', 'b', ['1020,265 1018,240 1040,225', '665,350 675,370 665,390', '1170,600 1170,620', '1200,595 1218,580 1212,605', '1190,645 1205,635', '745,175 745,190', '965,50 965,75', '905,110 910,120', '765,100 775,100', '935,175 938,190']);

  /* markers */
  var circles = [
    ['a', 748, 150, '#fbf7d6'], ['a', 770, 230, '#e8b7c8'], ['a', 697, 297, '#e8b7c8'], ['a', 1003, 237, '#c667ae'], ['a', 1050, 222, '#fbf7d6'],
    ['a', 1192, 222, '#b85fa6'], ['a', 1183, 242, '#5a2377'], ['a', 1225, 260, '#c667ae'], ['a', 262, 422, '#b45ca0'], ['a', 618, 410, '#c667ae'],
    ['a', 670, 460, '#b45ca0'], ['a', 532, 478, '#2e0a40'], ['a', 788, 500, '#3b0d50'], ['a', 730, 560, '#b45ca0'], ['a', 728, 680, '#5a2070'],
    ['a', 865, 635, '#e8b7c8'], ['a', 893, 677, '#d088b8'], ['a', 1022, 395, '#c982b6'], ['a', 1033, 365, '#eccfce'], ['a', 1123, 465, '#fbf7d6'],
    ['a', 1123, 440, '#e8b7c8'], ['a', 1192, 518, '#6e2a78'],
    ['b', 1068, 50, '#c667ae'], ['b', 1052, 150, '#8b3e8c'], ['b', 1080, 310, '#8b3e8c'], ['b', 1102, 268, '#3f0a5c'], ['b', 924, 365, '#742a80']
  ];
  circles.forEach(function (c) {
    var q = frames[c[0]]([c[1], c[2]]);
    add(g, 'circle', { 'class': 'm-circle', cx: q[0].toFixed(1), cy: q[1].toFixed(1), r: 9.5, fill: c[3] });
  });
  function diamonds(f, s) {
    parse(f, s).forEach(function (q) {
      var x = q[0], y = q[1], h = 6.4;
      add(g, 'polygon', { 'class': 'm-diamond', points: x + ',' + (y - h) + ' ' + (x + h) + ',' + y + ' ' + x + ',' + (y + h) + ' ' + (x - h) + ',' + y });
    });
  }
  diamonds('a', '638,123 648,132 667,182 712,212 758,155 797,233 682,300 445,208 288,278 270,305 368,296 428,293 488,300 338,337 363,330 328,357 440,346 532,357 408,365 302,373 332,383 443,380 476,380 342,410 262,395 497,432 532,448 601,444 320,460 324,456 390,500 412,525 553,563 488,642 690,522 670,545 724,332 790,296 812,310 824,330 789,343 856,320 863,290 840,373 899,377 852,417 880,412 908,430 912,448 942,428 748,435 780,433 813,440 973,450 983,467 1007,430 1048,407 1050,448 1019,473 938,287 955,287 1128,245 1168,253 1192,158 1242,158 1273,143 1333,286 1306,318 1317,340 1450,317 1438,377 1426,458 1447,500 1266,477 1217,484 1236,508 743,590 761,608 815,605 800,630 742,687 968,695 1049,733 1346,763 558,788 1056,815 1122,842 1012,834 976,860 875,868 813,862 770,885 690,832 676,846 720,866 712,872 1088,870');
  diamonds('b', '565,87 587,113 773,45 828,53 1157,88 1278,92 872,105 1052,113 1062,178 1092,218 798,233 740,278 1076,518 1086,602 1172,628');

  /* pie */
  var pie = document.getElementById('pie-slices');
  var slices = [[12.52, '#ff0000'], [27.37, '#a80000'], [12.66, '#55ff00'], [9.41, '#ff00c5'], [8.98, '#ff0000'], [8.98, '#ffaa00'], [11.17, '#bee8ff'], [8.91, '#00c5ff']];
  var cx = 622.5, cy = 659, r = 42.5, a = 0;
  slices.forEach(function (s) {
    var b = a + s[0] / 100 * 2 * Math.PI;
    var d = 'M' + cx + ' ' + cy + 'L' + (cx + r * Math.sin(a)).toFixed(2) + ' ' + (cy - r * Math.cos(a)).toFixed(2) +
      'A' + r + ' ' + r + ' 0 ' + (b - a > Math.PI ? 1 : 0) + ' 1 ' + (cx + r * Math.sin(b)).toFixed(2) + ' ' + (cy - r * Math.cos(b)).toFixed(2) + 'Z';
    add(pie, 'path', { d: d, fill: s[1] });
    a = b;
  });
})();
```
